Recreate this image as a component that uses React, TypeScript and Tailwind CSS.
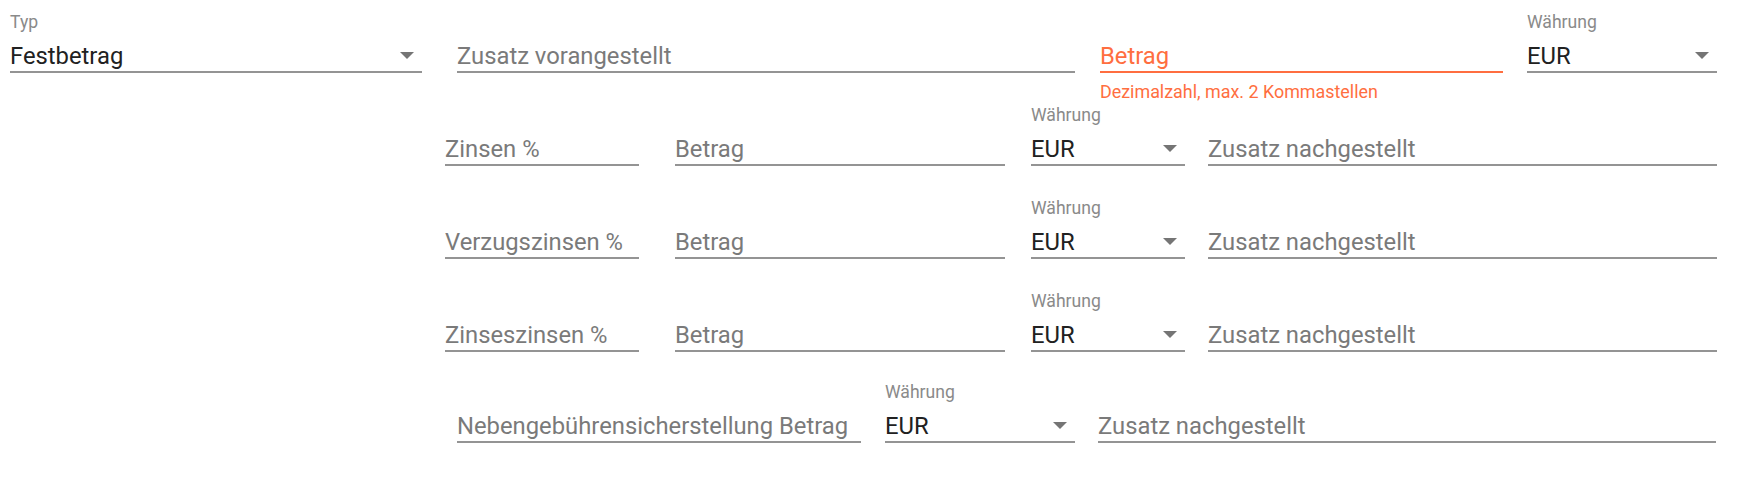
import React from "react";

interface FieldProps {
  width: string;
  label: string;
  value?: string;
  select?: boolean;
  error?: string;
  className?: string;
}

const Field: React.FC<FieldProps> = ({
  width,
  label,
  value,
  select,
  error,
  className,
}) => {
  const filled = !!value;
  const lineColor = error ? "bg-[#ff6e40]" : "bg-[#949494]";

  return (
    <div className={`relative flex flex-col pt-[12px] pb-[20px] ${width} ${className || ""}`}>
      <div className="h-[20px] text-[17.6px] leading-[20px] text-[#8a8a8a] whitespace-nowrap">
        {filled ? label : ""}
      </div>
      <div className="mt-[10px] flex h-[28px] items-center">
        <span
          className={`flex-1 whitespace-nowrap text-[23.8px] leading-[28px] ${
            error ? "text-[#ff6e40]" : filled ? "text-[#212121]" : "text-[#7a7a7a]"
          }`}
        >
          {filled ? value : label}
        </span>
        {select && (
          <span className="mr-[8px] mb-[2px] h-0 w-0 border-l-[7px] border-r-[7px] border-t-[7px] border-l-transparent border-r-transparent border-t-[#757575]" />
        )}
      </div>
      <div className={`mt-[1px] h-[2px] ${lineColor}`} />
      {error && (
        <div className="absolute left-0 top-[82px] whitespace-nowrap text-[17.9px] leading-[20px] text-[#ff6e40]">
          {error}
        </div>
      )}
    </div>
  );
};

const interestRows = ["Zinsen %", "Verzugszinsen %", "Zinseszinsen %"];

export default function App() {
  return (
    <div
      className="w-[1742px] h-[478px] bg-white"
      style={{ fontFamily: "Roboto, 'Noto Sans', Arial, sans-serif" }}
    >
      <div className="flex pl-[10px]">
        <Field width="w-[412px]" label="Typ" value="Festbetrag" select />
        <Field width="w-[618px]" className="ml-[35px]" label="Zusatz vorangestellt" />
        <Field
          width="w-[403px]"
          className="ml-[25px]"
          label="Betrag"
          error="Dezimalzahl, max. 2 Kommastellen"
        />
        <Field width="w-[190px]" className="ml-[24px]" label="Währung" value="EUR" select />
      </div>

      {interestRows.map((row) => (
        <div key={row} className="flex pl-[445px]">
          <Field width="w-[194px]" label={row} />
          <Field width="w-[330px]" className="ml-[36px]" label="Betrag" />
          <Field width="w-[154px]" className="ml-[26px]" label="Währung" value="EUR" select />
          <Field width="w-[509px]" className="ml-[23px]" label="Zusatz nachgestellt" />
        </div>
      ))}

      <div className="-mt-[2px] flex pl-[457px]">
        <Field width="w-[404px]" label="Nebengebührensicherstellung Betrag" />
        <Field width="w-[190px]" className="ml-[24px]" label="Währung" value="EUR" select />
        <Field width="w-[618px]" className="ml-[23px]" label="Zusatz nachgestellt" />
      </div>
    </div>
  );
}
